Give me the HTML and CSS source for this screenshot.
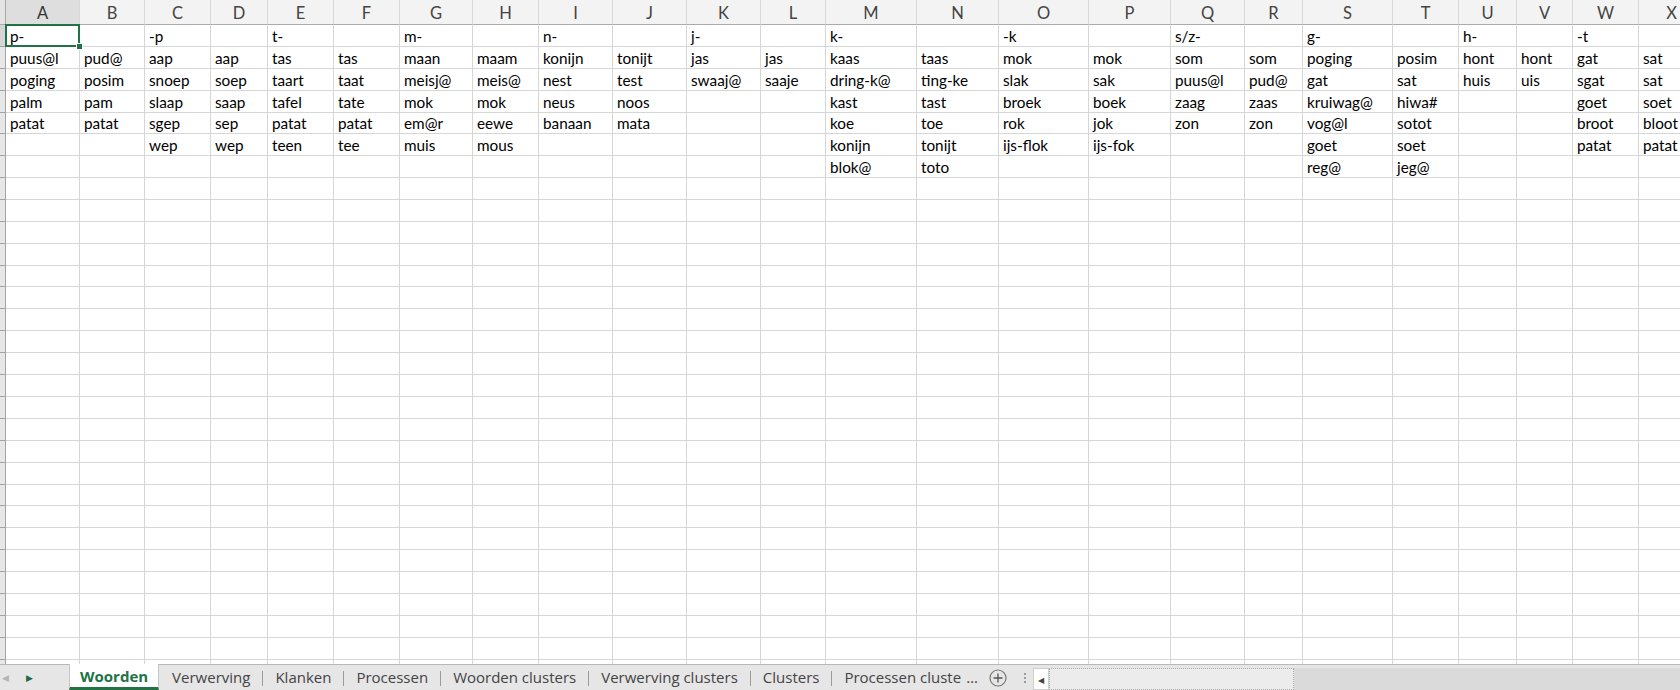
FILE: index.html
```html
<!DOCTYPE html>
<html lang="nl">
<head>
<meta charset="utf-8">
<title>Woorden</title>
<link rel="stylesheet" href="styles.css">
</head>
<body>
<div class="app">
  <div class="sheet">
    <div class="grid">
      <!-- header row -->
      <div class="corner"></div>
      <div class="ch sel">A</div><div class="ch">B</div><div class="ch">C</div><div class="ch">D</div><div class="ch">E</div><div class="ch">F</div><div class="ch">G</div><div class="ch">H</div><div class="ch">I</div><div class="ch">J</div><div class="ch">K</div><div class="ch">L</div><div class="ch">M</div><div class="ch">N</div><div class="ch">O</div><div class="ch">P</div><div class="ch">Q</div><div class="ch">R</div><div class="ch">S</div><div class="ch">T</div><div class="ch">U</div><div class="ch">V</div><div class="ch">W</div><div class="ch">X</div>
      <!-- row 1 -->
      <div class="rh rsel"></div>
      <div class="c active">p-</div><div class="c"></div><div class="c">-p</div><div class="c"></div><div class="c">t-</div><div class="c"></div><div class="c">m-</div><div class="c"></div><div class="c">n-</div><div class="c"></div><div class="c">j-</div><div class="c"></div><div class="c">k-</div><div class="c"></div><div class="c">-k</div><div class="c"></div><div class="c">s/z-</div><div class="c"></div><div class="c">g-</div><div class="c"></div><div class="c">h-</div><div class="c"></div><div class="c">-t</div><div class="c"></div>
      <!-- row 2 -->
      <div class="rh"></div>
      <div class="c">puus@l</div><div class="c">pud@</div><div class="c">aap</div><div class="c">aap</div><div class="c">tas</div><div class="c">tas</div><div class="c">maan</div><div class="c">maam</div><div class="c">konijn</div><div class="c">tonijt</div><div class="c">jas</div><div class="c">jas</div><div class="c">kaas</div><div class="c">taas</div><div class="c">mok</div><div class="c">mok</div><div class="c">som</div><div class="c">som</div><div class="c">poging</div><div class="c">posim</div><div class="c">hont</div><div class="c">hont</div><div class="c">gat</div><div class="c">sat</div>
      <!-- row 3 -->
      <div class="rh"></div>
      <div class="c">poging</div><div class="c">posim</div><div class="c">snoep</div><div class="c">soep</div><div class="c">taart</div><div class="c">taat</div><div class="c">meisj@</div><div class="c">meis@</div><div class="c">nest</div><div class="c">test</div><div class="c">swaaj@</div><div class="c">saaje</div><div class="c">dring-k@</div><div class="c">ting-ke</div><div class="c">slak</div><div class="c">sak</div><div class="c">puus@l</div><div class="c">pud@</div><div class="c">gat</div><div class="c">sat</div><div class="c">huis</div><div class="c">uis</div><div class="c">sgat</div><div class="c">sat</div>
      <!-- row 4 -->
      <div class="rh"></div>
      <div class="c">palm</div><div class="c">pam</div><div class="c">slaap</div><div class="c">saap</div><div class="c">tafel</div><div class="c">tate</div><div class="c">mok</div><div class="c">mok</div><div class="c">neus</div><div class="c">noos</div><div class="c"></div><div class="c"></div><div class="c">kast</div><div class="c">tast</div><div class="c">broek</div><div class="c">boek</div><div class="c">zaag</div><div class="c">zaas</div><div class="c">kruiwag@</div><div class="c">hiwa#</div><div class="c"></div><div class="c"></div><div class="c">goet</div><div class="c">soet</div>
      <!-- row 5 -->
      <div class="rh"></div>
      <div class="c">patat</div><div class="c">patat</div><div class="c">sgep</div><div class="c">sep</div><div class="c">patat</div><div class="c">patat</div><div class="c">em@r</div><div class="c">eewe</div><div class="c">banaan</div><div class="c">mata</div><div class="c"></div><div class="c"></div><div class="c">koe</div><div class="c">toe</div><div class="c">rok</div><div class="c">jok</div><div class="c">zon</div><div class="c">zon</div><div class="c">vog@l</div><div class="c">sotot</div><div class="c"></div><div class="c"></div><div class="c">broot</div><div class="c">bloot</div>
      <!-- row 6 -->
      <div class="rh"></div>
      <div class="c"></div><div class="c"></div><div class="c">wep</div><div class="c">wep</div><div class="c">teen</div><div class="c">tee</div><div class="c">muis</div><div class="c">mous</div><div class="c"></div><div class="c"></div><div class="c"></div><div class="c"></div><div class="c">konijn</div><div class="c">tonijt</div><div class="c">ijs-flok</div><div class="c">ijs-fok</div><div class="c"></div><div class="c"></div><div class="c">goet</div><div class="c">soet</div><div class="c"></div><div class="c"></div><div class="c">patat</div><div class="c">patat</div>
      <!-- row 7 -->
      <div class="rh"></div>
      <div class="c"></div><div class="c"></div><div class="c"></div><div class="c"></div><div class="c"></div><div class="c"></div><div class="c"></div><div class="c"></div><div class="c"></div><div class="c"></div><div class="c"></div><div class="c"></div><div class="c">blok@</div><div class="c">toto</div><div class="c"></div><div class="c"></div><div class="c"></div><div class="c"></div><div class="c">reg@</div><div class="c">jeg@</div><div class="c"></div><div class="c"></div><div class="c"></div><div class="c"></div>
      <!-- empty rows -->
      <div class="rh fill"></div>
      <div class="f"></div><div class="f"></div><div class="f"></div><div class="f"></div><div class="f"></div><div class="f"></div><div class="f"></div><div class="f"></div><div class="f"></div><div class="f"></div><div class="f"></div><div class="f"></div><div class="f"></div><div class="f"></div><div class="f"></div><div class="f"></div><div class="f"></div><div class="f"></div><div class="f"></div><div class="f"></div><div class="f"></div><div class="f"></div><div class="f"></div><div class="f"></div>
    </div>
  </div>
  <div class="tabbar">
    <div class="nav">
      <span class="nav-prev">&#9664;</span>
      <span class="nav-next">&#9654;</span>
    </div>
    <div class="tabs">
      <div class="tab current">Woorden</div>
      <div class="tab">Verwerving</div>
      <div class="tab sep">Klanken</div>
      <div class="tab sep">Processen</div>
      <div class="tab sep">Woorden clusters</div>
      <div class="tab sep">Verwerving clusters</div>
      <div class="tab sep">Clusters</div>
      <div class="tab sep last">Processen cluste<span class="cut">&hellip;</span></div>
    </div>
    <div class="add">
      <svg width="18" height="18" viewBox="0 0 18 18"><circle cx="9" cy="9" r="8" fill="none" stroke="#777" stroke-width="1.2"/><path d="M9 4.5v9M4.5 9h9" stroke="#555" stroke-width="1.3"/></svg>
    </div>
    <div class="grip"><i></i><i></i><i></i></div>
    <div class="hscroll">
      <div class="arrow">&#9664;</div>
      <div class="thumb"></div>
      <div class="track"></div>
    </div>
  </div>
</div>
</body>
</html>
```
FILE: styles.css
```css
html, body {
  margin: 0;
  padding: 0;
  background: #ffffff;
  overflow: hidden;
}

.app {
  width: 1680px;
  height: 690px;
  display: flex;
  flex-direction: column;
  font-family: "Lato", "Open Sans", sans-serif;
}

.sheet {
  flex: 1;
  overflow: hidden;
  background: #ffffff;
}

.grid {
  display: grid;
  grid-template-columns: 6px 74px 65px 66px 57px 66px 66px 73px 66px 74px 74px 74px 65px 91px 82px 90px 82px 74px 58px 90px 66px 58px 56px 66px 66px;
  grid-template-rows: 25px repeat(7, 21.9px) 1fr;
  width: 1705px;
  height: 665px;
}

.corner {
  background: #e4e4e4;
  border-right: 1px solid #a9a9a9;
  border-bottom: 1px solid #a9a9a9;
}

.ch {
  background: #f3f3f3;
  border-right: 1px solid #d8d8d8;
  border-bottom: 1px solid #ababab;
  color: #444444;
  font-size: 16.5px;
  display: flex;
  align-items: center;
  justify-content: center;
  padding-top: 1px;
}

.ch.sel {
  background: #dedede;
  color: #333333;
  border-bottom: 1px solid #9a9a9a;
}

.rh {
  background: #e7e7e7;
  border-right: 1px solid #a3a3a3;
  border-bottom: 1px solid #a3a3a3;
}

.rh.rsel {
  background: #d6d6d6;
}

.rh.fill {
  border-bottom: none;
  background:
    repeating-linear-gradient(to bottom, #e7e7e7 0, #e7e7e7 20.9px, #a3a3a3 20.9px, #a3a3a3 21.9px);
}

.c {
  border-right: 1px solid #d6d6d6;
  border-bottom: 1px solid #d6d6d6;
  font-size: 15.3px;
  color: #000000;
  padding: 0 3px 1px 4px;
  display: flex;
  align-items: flex-end;
  line-height: 18px;
  white-space: nowrap;
  overflow: hidden;
}

.c.active {
  position: relative;
  overflow: visible;
}

.c.active::after {
  content: "";
  position: absolute;
  left: -1px;
  top: -1px;
  right: -1px;
  bottom: -1px;
  border: 2px solid #217346;
  pointer-events: none;
}

.c.active::before {
  content: "";
  position: absolute;
  right: -4px;
  bottom: -4px;
  width: 5px;
  height: 5px;
  background: #217346;
  border: 1px solid #ffffff;
  z-index: 2;
}

.f {
  border-right: 1px solid #d6d6d6;
  background:
    repeating-linear-gradient(to bottom, #ffffff 0, #ffffff 20.9px, #d6d6d6 20.9px, #d6d6d6 21.9px);
}

/* sheet tabs */
.tabbar {
  height: 25px;
  flex: none;
  display: flex;
  align-items: stretch;
  background: #e6e6e6;
  border-top: 1px solid #b8b8b8;
  font-family: "Open Sans", "Noto Sans", sans-serif;
  font-size: 15px;
  color: #444444;
}

.nav {
  width: 69px;
  display: flex;
  align-items: center;
  font-size: 9px;
}

.nav-prev {
  color: #b5b5b5;
  margin-left: 2px;
}

.nav-next {
  color: #1e6b41;
  margin-left: 17px;
}

.tabs {
  display: flex;
  align-items: stretch;
}

.tab {
  display: flex;
  align-items: center;
  padding: 0 12px 1px 13px;
  position: relative;
  white-space: nowrap;
}

.tab.sep::before {
  content: "";
  position: absolute;
  left: 0;
  top: 6px;
  bottom: 4px;
  width: 1px;
  background: #9b9b9b;
}

.tab.current {
  background: #ffffff;
  color: #217346;
  font-weight: 700;
  padding: 0 10px 0 10px;
  border-left: 1px solid #c6c6c6;
  border-right: 1px solid #c6c6c6;
  margin-top: -1px;
  border-bottom: 3px solid #217346;
}

.tab.last {
  padding-right: 7px;
}

.cut {
  margin-left: 5px;
}

.add {
  display: flex;
  align-items: center;
  margin-left: 4px;
  width: 28px;
}

.grip {
  width: 16px;
  display: flex;
  flex-direction: column;
  align-items: center;
  justify-content: center;
  gap: 2px;
}

.grip i {
  display: block;
  width: 2px;
  height: 2px;
  background: #9a9a9a;
}

.hscroll {
  flex: 1;
  display: flex;
  margin-top: 3px;
  margin-left: 0;
}

.arrow {
  width: 16px;
  background: #ffffff;
  border: 1px solid #cfcfcf;
  box-sizing: border-box;
  font-size: 8px;
  color: #444444;
  display: flex;
  align-items: center;
  justify-content: center;
}

.thumb {
  width: 245px;
  background: #ececec;
  border: 1px dotted #a8a8a8;
  box-sizing: border-box;
}

.track {
  flex: 1;
  background: #dadada;
}
```
